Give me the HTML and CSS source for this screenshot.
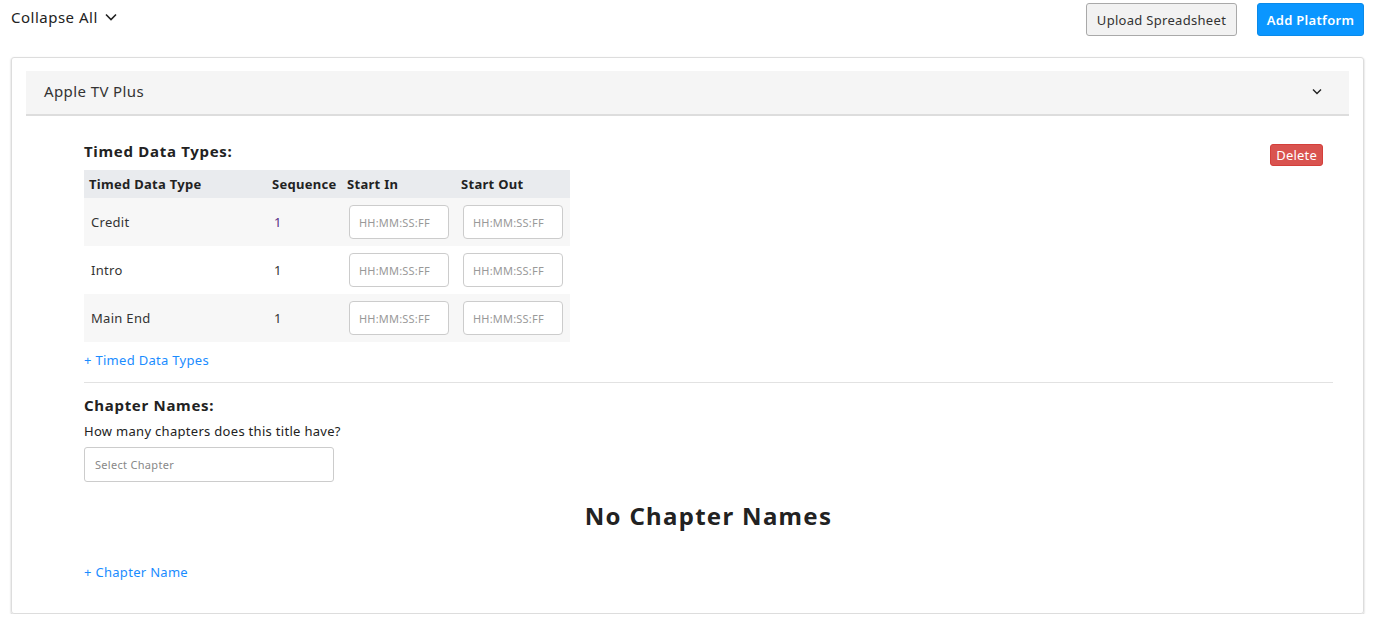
FILE: index.html
```html
<!DOCTYPE html>
<html lang="en">
  <head>
    <meta charset="UTF-8" />
    <meta name="viewport" content="width=device-width, initial-scale=1.0" />
    <title>Platforms</title>
    <link rel="stylesheet" href="styles.css">
  </head>

  <body>
    <div class="topbar">
      <button class="collapse-all" type="button">
        Collapse All
        <svg width="12" height="8" viewBox="0 0 12 8"><path d="M1 1.5l5 5 5-5" fill="none" stroke="#222" stroke-width="1.6"/></svg>
      </button>
      <div class="actions">
        <button class="btn btn-light" type="button">Upload Spreadsheet</button>
        <button class="btn btn-primary" type="button">Add Platform</button>
      </div>
    </div>

    <div class="card">
      <div class="panel-head">
        <span>Apple TV Plus</span>
        <svg width="10" height="7" viewBox="0 0 10 7"><path d="M1 1.5l4 4 4-4" fill="none" stroke="#222" stroke-width="1.4"/></svg>
      </div>

      <div class="panel-body">
        <div class="section-top">
          <h3>Timed Data Types:</h3>
          <button class="btn-delete" type="button">Delete</button>
        </div>

        <table class="timed">
          <tr>
            <th class="c-type">Timed Data Type</th>
            <th class="c-seq">Sequence</th>
            <th class="c-in">Start In</th>
            <th class="c-out">Start Out</th>
          </tr>
          <tr>
            <td>Credit</td>
            <td class="seq seq-first">1</td>
            <td><input type="text" placeholder="HH:MM:SS:FF" /></td>
            <td><input type="text" placeholder="HH:MM:SS:FF" /></td>
          </tr>
          <tr>
            <td>Intro</td>
            <td class="seq">1</td>
            <td><input type="text" placeholder="HH:MM:SS:FF" /></td>
            <td><input type="text" placeholder="HH:MM:SS:FF" /></td>
          </tr>
          <tr>
            <td>Main End</td>
            <td class="seq">1</td>
            <td><input type="text" placeholder="HH:MM:SS:FF" /></td>
            <td><input type="text" placeholder="HH:MM:SS:FF" /></td>
          </tr>
        </table>

        <a class="add-link link-timed" href="#">+ Timed Data Types</a>

        <hr />

        <h3>Chapter Names:</h3>
        <p class="hint">How many chapters does this title have?</p>
        <div class="select">Select Chapter</div>

        <h2 class="empty">No Chapter Names</h2>

        <a class="add-link" href="#">+ Chapter Name</a>
      </div>
    </div>
  </body>
</html>
```

FILE: styles.css
```css
body {
  margin: 0;
  font-family: "Noto Sans", sans-serif;
  letter-spacing: 0.3px;
  color: #222;
  background: #fff;
}
.topbar {
  display: flex;
  justify-content: space-between;
  align-items: flex-start;
  padding: 3px 12px 0 11px;
  height: 54px;
}
.collapse-all {
  border: 0;
  background: none;
  padding: 0;
  margin-top: 4px;
  font-family: inherit;
  font-size: 15px;
  letter-spacing: 0.5px;
  color: #222;
  display: flex;
  align-items: center;
  gap: 7px;
}
.actions {
  display: flex;
  gap: 20px;
}
.btn {
  font-family: inherit;
  font-size: 13px;
  letter-spacing: 0.3px;
  height: 33px;
  padding: 0 6px;
  border-radius: 3px;
}
.btn-light {
  background: #f2f2f2;
  border: 1px solid #a9a9a9;
  color: #333;
  width: 151px;
}
.btn-primary {
  background: #0a96ff;
  border: 1px solid #0a8ae9;
  color: #fff;
  font-weight: 600;
  width: 107px;
}

.card {
  margin: 0 12px 0 11px;
  border: 1px solid #ddd;
  border-radius: 3px;
  box-shadow: 0 1px 2px rgba(0, 0, 0, 0.25);
  padding: 13px 14px 31px 14px;
}
.panel-head {
  background: #f5f5f5;
  border-bottom: 2px solid #ddd;
  height: 43px;
  display: flex;
  align-items: center;
  justify-content: space-between;
  padding: 0 27px 3px 18px;
  box-sizing: border-box;
  height: 45px;
  font-size: 15px;
  letter-spacing: 0.4px;
  color: #333;
}
.panel-body {
  padding: 22px 16px 0 58px;
}
.section-top {
  display: flex;
  justify-content: space-between;
  align-items: flex-start;
}
h3 {
  margin: 3px 0 0 0;
  font-size: 15px;
  font-weight: 700;
  letter-spacing: 0.7px;
  color: #222;
}
.btn-delete {
  margin: 6px 10px 0 0;
  background: #d9534f;
  border: 1px solid #d43f3a;
  color: #fff;
  font-family: inherit;
  font-size: 13px;
  letter-spacing: 0.2px;
  border-radius: 3px;
  height: 22px;
  padding: 0 5px;
}
.timed {
  border-collapse: collapse;
  width: 486px;
  margin-top: 4px;
  font-size: 13px;
}
.timed th {
  background: #e9ebee;
  text-align: left;
  font-weight: 700;
  letter-spacing: 0.3px;
  height: 28px;
  padding: 0;
  color: #222;
}
.timed .c-type {
  padding-left: 5px;
  width: 183px;
}
.timed .c-seq {
  width: 75px;
}
.timed .c-in {
  width: 114px;
}
.timed td {
  height: 48px;
  padding: 0;
  color: #333;
}
.timed td:first-child {
  padding-left: 7px;
}
.timed tr:nth-child(2) td,
.timed tr:nth-child(4) td {
  background: #f7f7f7;
}
.timed .seq {
  padding-left: 2px;
}
.timed .seq-first {
  color: #5b2d86;
}
.timed input {
  width: 100px;
  height: 34px;
  box-sizing: border-box;
  border: 1px solid #ccc;
  border-radius: 4px;
  padding: 0 9px;
  margin-left: 2px;
  font-family: inherit;
  font-size: 11px;
  letter-spacing: 0.2px;
  background: #fff;
}
.timed input::placeholder {
  color: #999;
}
.add-link {
  display: inline-block;
  color: #1a8cff;
  text-decoration: none;
  font-size: 13px;
  margin-top: 9px;
}
hr {
  border: 0;
  border-top: 1px solid #e2e2e2;
  margin: 12px 0 12px 0;
}
.hint {
  font-size: 13px;
  margin: 7px 0 7px 0;
  color: #222;
}
.select {
  width: 250px;
  height: 35px;
  box-sizing: border-box;
  border: 1px solid #ccc;
  border-radius: 3px;
  font-size: 11px;
  color: #888;
  padding: 0 10px;
  display: flex;
  align-items: center;
}
.empty {
  text-align: center;
  font-size: 24px;
  font-weight: 700;
  letter-spacing: 1.3px;
  margin: 17px 0 0 0;
  color: #222;
}
.empty + .add-link {
  margin-top: 31px;
}
```
